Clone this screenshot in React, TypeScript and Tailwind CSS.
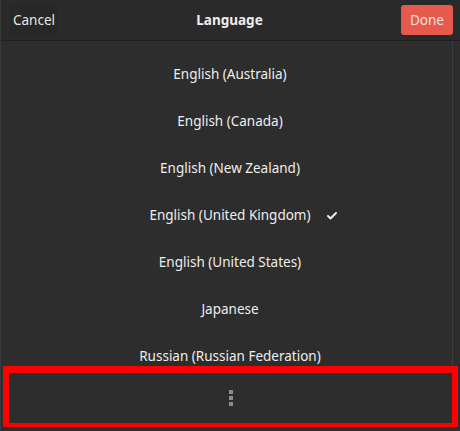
import { Check } from 'lucide-react';

const languages = [
  'English (Australia)',
  'English (Canada)',
  'English (New Zealand)',
  'English (United Kingdom)',
  'English (United States)',
  'Japanese',
  'Russian (Russian Federation)',
];

const selected = 'English (United Kingdom)';

export default function App() {
  return (
    <div
      className="flex h-[431px] w-[460px] flex-col overflow-hidden border-l border-[#3a3a3a] bg-[#2d2d2d] text-[#eeeeec]"
      style={{ fontFamily: '"Noto Sans", "Open Sans", sans-serif' }}
    >
      {/* header bar */}
      <div className="flex h-[41px] shrink-0 items-center justify-between border-b border-[#1f1f1f] bg-[#2a2a2a] pb-[1px] pl-[9px] pr-[7px] pt-[1px]">
        <button
          type="button"
          className="h-[31px] w-[48px] rounded-[3px] border border-[#262626] bg-[#272727] text-[13.5px] text-[#e6e6e4]"
        >
          Cancel
        </button>
        <span className="text-[13.5px] font-bold text-[#eeeeec]">Language</span>
        <button
          type="button"
          className="h-[30px] w-[52px] rounded-[3px] bg-[#e55a4c] text-[13.5px] text-[#fbe0da]"
        >
          Done
        </button>
      </div>

      {/* language list */}
      <div className="mr-[7px] flex min-h-0 flex-1 flex-col overflow-hidden border-r border-[#3c3c3c] pt-[10px]">
        {languages.map((lang) => (
          <div key={lang} className="flex h-[47px] shrink-0 items-center justify-center pl-[7px] text-[13.5px]">
            <span className="relative">
              {lang}
              {lang === selected ? (
                <Check
                  size={12}
                  strokeWidth={4}
                  className="absolute left-full top-1/2 ml-[15px] -translate-y-1/2 text-[#eeeeec]"
                />
              ) : null}
            </span>
          </div>
        ))}
      </div>

      {/* highlighted "more" area */}
      <div className="mx-[2px] mb-[4px] flex h-[61px] shrink-0 items-center justify-center border-[6px] border-b-[4px] border-t-[7px] border-[#ff0000] bg-[#2d2d2d]">
        <div className="flex flex-col gap-[2px]">
          <span className="block h-[4px] w-[4px] bg-[#8c8c8c]" />
          <span className="block h-[4px] w-[4px] bg-[#8c8c8c]" />
          <span className="block h-[4px] w-[4px] bg-[#8c8c8c]" />
        </div>
      </div>
    </div>
  );
}
